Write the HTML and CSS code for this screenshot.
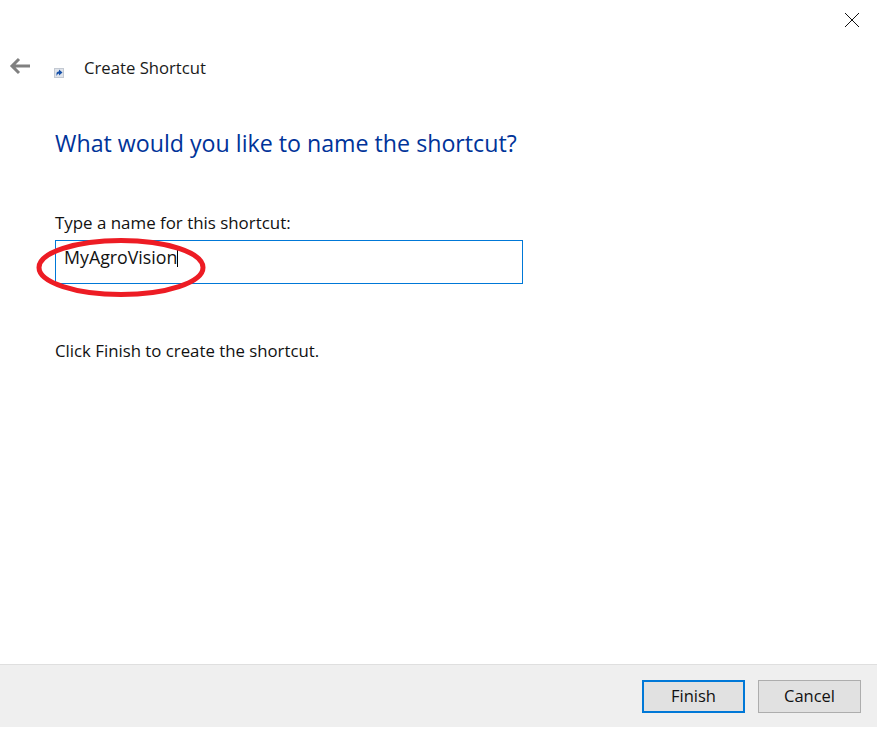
FILE: index.html
```html
<!DOCTYPE html>
<html lang="en">
<head>
<meta charset="utf-8">
<title>Create Shortcut</title>
<link rel="stylesheet" href="styles.css">
</head>
<body>
<div class="dialog">
  <div class="close-row">
    <svg class="close" width="16" height="16" viewBox="0 0 16 16"><path d="M1 1L15 15M15 1L1 15" stroke="#111" stroke-width="1" fill="none"/></svg>
  </div>
  <div class="titlebar">
    <svg class="back" width="22" height="18" viewBox="0 0 22 18"><path d="M10 2L3 9L10 16M3 9H21" stroke="#808080" stroke-width="3" fill="none"/></svg>
    <svg class="app-icon" width="10" height="10" viewBox="0 0 10 10"><rect x="0" y="0" width="10" height="10" fill="#dfe3ea"/><rect x="0.5" y="0.5" width="9" height="9" fill="none" stroke="#c3c9d2"/><path d="M2.5 8V5.5C2.5 4 4 3.5 5 3.5V1.5L8.5 4.5L5 7.5V5.5C4.2 5.5 3.5 6.2 2.5 8Z" fill="#1550a8"/></svg>
    <span class="title">Create Shortcut</span>
  </div>
  <main class="content">
    <h1 class="heading">What would you like to name the shortcut?</h1>
    <label class="field-label">Type a name for this shortcut:</label>
    <div class="input">MyAgroVision<span class="caret"></span></div>
    <p class="hint">Click Finish to create the shortcut.</p>
  </main>
  <footer class="footer">
    <div class="btn btn-primary">Finish</div>
    <div class="btn">Cancel</div>
  </footer>
  <svg class="circle" width="174" height="64" viewBox="0 0 174 64"><ellipse cx="87" cy="32.5" rx="82" ry="27" fill="none" stroke="#ed1c24" stroke-width="5"/></svg>
</div>
</body>
</html>
```
FILE: styles.css
```css
* { box-sizing: border-box; }
html, body { margin: 0; padding: 0; background: #fff; }
body { font-family: "Open Sans", "Noto Sans", "Liberation Sans", sans-serif; color: #111; }
.dialog { position: relative; width: 877px; height: 739px; display: flex; flex-direction: column; }
.close-row { height: 52px; padding: 12px 0 0 844px; }
.close { display: block; }
.titlebar { height: 32px; display: flex; align-items: center; padding-left: 9px; }
.back { margin-top: -4px; }
.app-icon { margin: 10px 0 0 23px; }
.title { margin: -2px 0 0 20px; font-size: 16.7px; color: #1a1a1a; }
.content { flex: 1; padding: 43px 0 0 55px; }
.heading { margin: 0; font-size: 23.2px; font-weight: 400; line-height: 32px; color: #003399; }
.field-label { display: block; margin-top: 53px; font-size: 16.9px; line-height: 22px; }
.input { width: 468px; height: 44px; margin-top: 6px; border: 1px solid #0078d7; padding: 0 0 10px 8px; display: flex; align-items: center; font-size: 17.8px; }
.caret { width: 1px; height: 20px; background: #000; }
.hint { margin: 56px 0 0; font-size: 16.8px; line-height: 22px; }
.footer { height: 63px; margin-bottom: 12px; background: #efefef; border-top: 1px solid #dfdfdf; display: flex; justify-content: flex-end; align-items: center; gap: 13px; padding: 0 16px 0 0; }
.btn { width: 103px; height: 33px; padding-bottom: 2px; background: #e1e1e1; border: 1px solid #adadad; display: flex; align-items: center; justify-content: center; font-size: 16.5px; }
.btn-primary { border: 2px solid #0078d7; }
.circle { position: absolute; left: 34px; top: 235px; }
```
